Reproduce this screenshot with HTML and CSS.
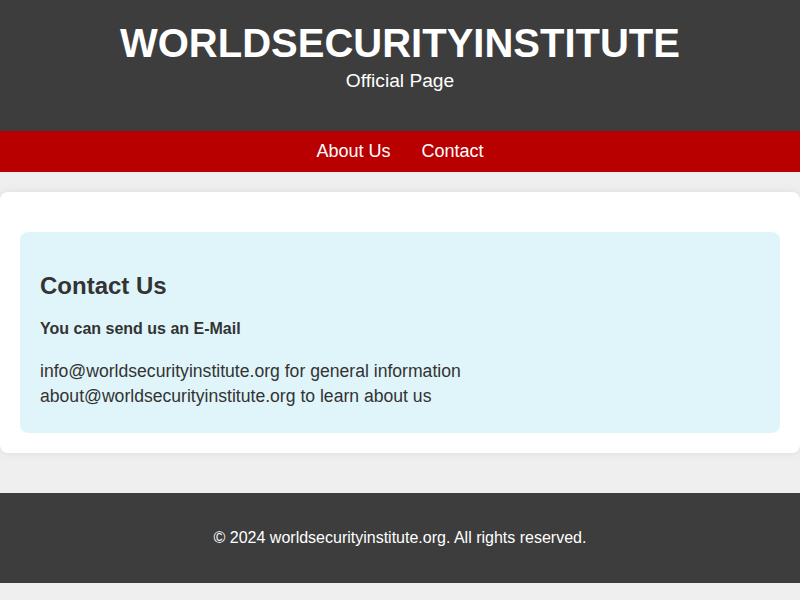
FILE: index.html
```html
<!DOCTYPE html>
<html>
<head>
  <meta charset="UTF-8">
  <title>World Security Institute</title>
  <link rel="stylesheet" href="styles.css">
</head>
<body>
  <header class="site-header">
    <h1>WORLDSECURITYINSTITUTE</h1>
    <p>Official Page</p>
  </header>
  <nav class="site-nav">
    <a href="#about">About Us</a>
    <a href="#contact">Contact</a>
  </nav>
  <main class="container">
    <section class="contact" id="contact">
      <h2>Contact Us</h2>
      <p class="lead">You can send us an E-Mail</p>
      <p class="emails">
        info@worldsecurityinstitute.org for general information<br>
        about@worldsecurityinstitute.org to learn about us
      </p>
    </section>
  </main>
  <footer class="site-footer">
    <p>&copy; 2024 worldsecurityinstitute.org. All rights reserved.</p>
  </footer>
</body>
</html>
```

FILE: styles.css
```css
body {
  margin: 0;
  background-color: #efefef;
  color: #333;
  font-family: "Liberation Sans", Arial, sans-serif;
}

.site-header {
  background-color: #3d3d3d;
  color: #fff;
  text-align: center;
  padding: 20px 20px 39px;
}

.site-header h1 {
  font-size: 40px;
  line-height: 46px;
  margin: 0;
}

.site-header p {
  font-size: 19.2px;
  line-height: 22px;
  margin: 4px 0 0;
}

.site-nav {
  background-color: #b80000;
  display: flex;
  justify-content: center;
  gap: 31px;
  padding: 10px 0;
}

.site-nav a {
  color: #fff;
  text-decoration: none;
  font-size: 18px;
  line-height: 21px;
}

.container {
  background-color: #fff;
  margin: 20px 0 40px;
  padding: 20px;
  border-radius: 8px;
  box-shadow: 0 0 10px rgba(0, 0, 0, 0.08);
}

.contact {
  background-color: #e0f5fa;
  border-radius: 8px;
  padding: 20px;
  margin-top: 20px;
}

.contact h2 {
  font-size: 24px;
  line-height: 28px;
  margin: 20px 0 0;
}

.contact .lead {
  font-weight: bold;
  font-size: 16px;
  line-height: 18px;
  margin: 20px 0 0;
}

.contact .emails {
  font-size: 17.6px;
  line-height: 25px;
  margin: 21px 0 4px;
}

.site-footer {
  background-color: #3d3d3d;
  color: #fff;
  text-align: center;
  padding: 20px;
}

.site-footer p {
  margin: 16px 0;
  font-size: 16px;
  line-height: 18px;
}
```
